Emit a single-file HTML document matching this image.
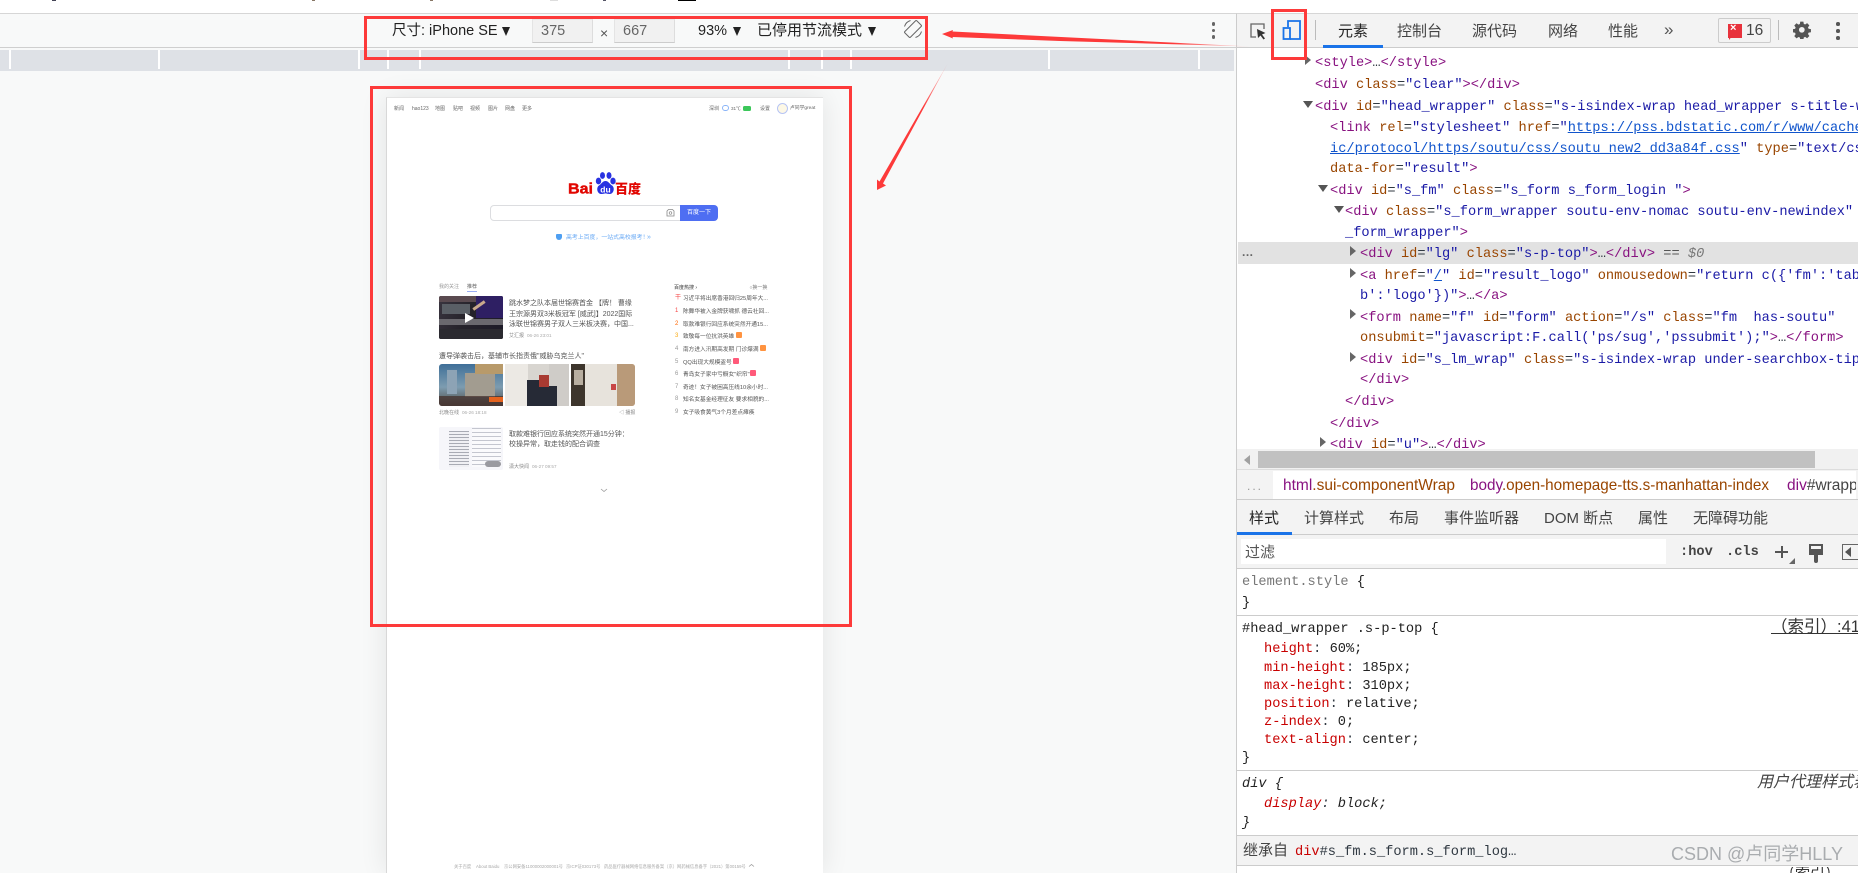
<!DOCTYPE html>
<html lang="zh"><head><meta charset="utf-8"><title>DevTools</title>
<style>
*{box-sizing:border-box}
html,body{margin:0;padding:0;width:1858px;height:873px;overflow:hidden;background:#fff}
body{position:relative;font-family:"Liberation Sans","Noto Sans CJK SC",sans-serif;color:#333}
.a{position:absolute;white-space:pre}
.t{position:absolute;white-space:pre;line-height:20px;font-size:15px;color:#444}
#code{position:absolute;left:1237px;top:48px;width:621px;height:401px;overflow:hidden;background:#fff}
.c{position:absolute;white-space:pre;font:13.67px/20px "Liberation Mono",monospace;color:#303942;margin-top:1.5px}
.g{color:#881280}.b{color:#994500}.v{color:#1a1aa6}.u{color:#1155cc;text-decoration:underline}
.r{color:#c80000}.k{color:#222}
.tri{position:absolute;width:0;height:0;border-left:6px solid #666;border-top:5px solid transparent;border-bottom:5px solid transparent}
.trd{position:absolute;width:0;height:0;border-top:7px solid #555;border-left:5px solid transparent;border-right:5px solid transparent}
#pg{position:absolute;left:386px;top:97px;width:437px;height:776px;background:#fff;border-left:1px solid #d8d8d8;border-top:1px solid #e4e4e4;box-shadow:0 0 26px rgba(0,0,0,.09)}
#mini{position:absolute;left:0;top:0;width:1236px;height:873px;overflow:hidden;filter:blur(.35px)}
.p{position:absolute;white-space:pre;font-size:5px;line-height:8px;color:#666;margin-top:1px}
.n{position:absolute;white-space:pre;font-size:7px;line-height:10px;color:#555;margin-top:1px}
.h{position:absolute;white-space:pre;font-size:5.7px;line-height:10px;color:#555;margin-top:1.5px}
.i{position:absolute;overflow:hidden;border-radius:2px}
.rb{position:absolute;border:3px solid #fd3a3a}
.tick{position:absolute;top:50px;width:2px;height:19px;background:#fff}
</style></head><body>
<!-- top sliver -->
<div class="a" style="left:52px;top:0;width:4px;height:1px;background:#445"></div>
<div class="a" style="left:312px;top:0;width:3px;height:1px;background:#876"></div>
<div class="a" style="left:430px;top:0;width:3px;height:1px;background:#876"></div>
<div class="a" style="left:550px;top:0;width:8px;height:1px;background:#ddd"></div>
<div class="a" style="left:603px;top:0;width:3px;height:1px;background:#556"></div>
<div class="a" style="left:678px;top:0;width:18px;height:1px;background:#000"></div>

<!-- device bar -->
<div class="a" style="left:0;top:13px;width:1236px;height:860px;background:#f8f9f9"></div>
<div class="a" style="left:0;top:13px;width:1236px;height:1px;background:#d6d6d6"></div>
<div class="a" style="left:0;top:47px;width:1236px;height:1px;background:#cfcfcf"></div>
<div class="t" style="left:392px;top:21px;font-size:14.5px;color:#222">尺寸: iPhone SE</div>
<div class="a" style="left:502px;top:27px;width:0;height:0;border-top:9px solid #222;border-left:4.5px solid transparent;border-right:4.5px solid transparent"></div>
<div class="a" style="left:532px;top:19px;width:61px;height:24px;background:#f1f1f1;border-bottom:1px solid #ccc;border-right:1px solid #ddd;border-left:1px solid #e4e4e4;border-top:1px solid #e8e8e8"></div>
<div class="t" style="left:541px;top:21px;font-size:14.5px;color:#666">375</div>
<div class="t" style="left:600px;top:23px;font-size:14px;color:#555">×</div>
<div class="a" style="left:614px;top:19px;width:61px;height:24px;background:#f1f1f1;border-bottom:1px solid #ccc;border-right:1px solid #ddd;border-left:1px solid #e4e4e4;border-top:1px solid #e8e8e8"></div>
<div class="t" style="left:623px;top:21px;font-size:14.5px;color:#666">667</div>
<div class="t" style="left:698px;top:21px;font-size:14.5px;color:#222">93%</div>
<div class="a" style="left:733px;top:27px;width:0;height:0;border-top:9px solid #222;border-left:4.5px solid transparent;border-right:4.5px solid transparent"></div>
<div class="t" style="left:757px;top:21px;font-size:15px;color:#222">已停用节流模式</div>
<div class="a" style="left:868px;top:27px;width:0;height:0;border-top:9px solid #222;border-left:4.5px solid transparent;border-right:4.5px solid transparent"></div>
<svg class="a" style="left:903px;top:19px" width="20" height="20" viewBox="0 0 20 20"><g fill="none" stroke="#666" stroke-width="1"><rect x="6" y="1.500" width="8" height="17" rx="1" transform="rotate(45 10 10)"/><path d="M1.500 7.500A9 9 0 0 1 7.500 1.500M18.500 12.500A9 9 0 0 1 12.500 18.500"/></g></svg>
<div class="a" style="left:1211.5px;top:22px;width:3.5px;height:3.5px;border-radius:50%;background:#666"></div>
<div class="a" style="left:1211.5px;top:28.5px;width:3.5px;height:3.5px;border-radius:50%;background:#666"></div>
<div class="a" style="left:1211.5px;top:35px;width:3.5px;height:3.5px;border-radius:50%;background:#666"></div>

<!-- ruler -->
<div class="a" style="left:0;top:50px;width:1234px;height:21px;background:#dee1e6"></div>
<div class="tick" style="left:9px"></div><div class="tick" style="left:158px"></div><div class="tick" style="left:358px"></div><div class="tick" style="left:387px"></div><div class="tick" style="left:419px"></div><div class="tick" style="left:788px"></div><div class="tick" style="left:821px"></div><div class="tick" style="left:850px"></div><div class="tick" style="left:1048px"></div><div class="tick" style="left:1198px"></div>

<!-- mobile preview -->
<div id="mini">
<div id="pg"></div>
<span class="p" style="left:394px;top:104px">新闻</span><span class="p" style="left:412px;top:104px">hao123</span><span class="p" style="left:435px;top:104px">地图</span><span class="p" style="left:453px;top:104px">贴吧</span><span class="p" style="left:470px;top:104px">视频</span><span class="p" style="left:488px;top:104px">图片</span><span class="p" style="left:505px;top:104px">网盘</span><span class="p" style="left:522px;top:104px">更多</span>
<span class="p" style="left:709px;top:104px">深圳</span>
<div class="a" style="left:722px;top:105px;width:7px;height:6px;border:1px solid #8ab4f8;border-radius:3px"></div>
<span class="p" style="left:731px;top:104px;font-size:4.6px">31℃</span>
<div class="a" style="left:743px;top:106px;width:8px;height:5px;background:#3cc75a;border-radius:1.5px"></div>
<span class="p" style="left:760px;top:104px">设置</span>
<div class="a" style="left:777px;top:103px;width:11px;height:11px;border-radius:50%;border:1px solid #b6c4f4;background:#fdf8e6"></div>
<span class="p" style="left:790px;top:104px;font-size:4.8px">卢同学great</span>

<svg class="a" style="left:560px;top:168px" width="90" height="32" viewBox="560 168 90 32">
<text x="568" y="193.500" font-family="Liberation Sans" font-weight="700" font-size="14.500" fill="#e10601" stroke="#e10601" stroke-width=".4" textLength="25" lengthAdjust="spacingAndGlyphs">Bai</text>
<g fill="#2932e1"><ellipse cx="598.500" cy="181" rx="2.700" ry="3.400"/><ellipse cx="602.500" cy="175.500" rx="2.500" ry="3.400"/><ellipse cx="609" cy="175.500" rx="2.500" ry="3.400"/><ellipse cx="613" cy="181" rx="2.700" ry="3.400"/><path d="M605.500 181c3 0 4 3 6.500 4.500c3 2 2 8-2 8.500c-2 .3-3-.6-4.500-.6s-2.500 .9-4.500 .6c-4-.5-5-6.500-2-8.500c2.500-1.500 3.500-4.500 6.500-4.500z"/></g>
<text x="605.500" y="192.500" text-anchor="middle" font-family="Liberation Sans" font-weight="700" font-size="8.500" fill="#fff">du</text>
<text x="615" y="193.500" font-family="Liberation Sans,Noto Sans CJK SC" font-weight="900" font-size="13" fill="#e10601" textLength="26" lengthAdjust="spacingAndGlyphs">百度</text>
</svg>

<div class="a" style="left:490px;top:205px;width:192px;height:15.500px;border:1px solid #dcdde0;border-radius:4px 0 0 4px;background:#fff"></div>
<div class="a" style="left:680px;top:205px;width:38px;height:15.500px;background:#4e6ef2;border-radius:0 4px 4px 0"></div>
<span class="p" style="left:687px;top:208px;color:#fff;font-size:6px">百度一下</span>
<svg class="a" style="left:666px;top:208px" width="9" height="9" viewBox="0 0 9 9"><path d="M1 8V3l1.500-1.500h4L8 3v5z" fill="none" stroke="#888" stroke-width=".8"/><circle cx="4.500" cy="5" r="1.300" fill="none" stroke="#888" stroke-width=".7"/></svg>
<div class="a" style="left:556px;top:234px;width:6px;height:6px;background:#4e9ff2;border-radius:1px 1px 3px 3px"></div>
<span class="p" style="left:566px;top:233px;color:#6aaaf5;font-size:5.900px">高考上百度，一站式高校报考！</span>
<span class="p" style="left:647px;top:233px;color:#6aaaf5;font-size:7px">»</span>

<span class="p" style="left:439px;top:282px;color:#999">我的关注</span><span class="p" style="left:467px;top:282px;color:#666">推荐</span>
<div class="a" style="left:467px;top:291px;width:10px;height:1px;background:#9aaef5"></div>

<div class="i" style="left:439px;top:296px;width:64px;height:43px;background:linear-gradient(115deg,#3a3540 0%,#25222a 45%,#1c1a28 100%)">
 <div class="a" style="left:0;top:0;width:64px;height:6px;background:#5a4a50"></div>
 <div class="a" style="left:37px;top:0;width:27px;height:22px;background:#2e1f63"></div>
 <div class="a" style="left:33px;top:8px;width:14px;height:3px;background:#c9a98c;transform:rotate(-35deg)"></div>
 <div class="a" style="left:3px;top:8px;width:28px;height:10px;background:#5a5f66"></div>
 <div class="a" style="left:0;top:23px;width:64px;height:6px;background:#6a686e"></div>
 <div class="a" style="left:0;top:33px;width:64px;height:10px;background:#2b2a30"></div>
 <div class="a" style="left:26px;top:17px;width:0;height:0;border-left:9px solid #fff;border-top:5px solid transparent;border-bottom:5px solid transparent"></div>
</div>
<span class="n" style="left:509px;top:298px">跳水梦之队本届世锦赛首金 【牌！ 曹缘</span>
<span class="n" style="left:509px;top:309px">王宗源男双3米板冠军 [威武]】2022国际</span>
<span class="n" style="left:509px;top:319px">泳联世锦赛男子双人三米板决赛，中国...</span>
<span class="p" style="left:509px;top:331px;color:#888">艾汇报</span><span class="p" style="left:527px;top:331px;color:#aaa;font-size:4.600px">06-26 23:01</span>

<span class="n" style="left:439px;top:351px">遭导弹袭击后，基辅市长指责俄"威胁乌克兰人"</span>
<div class="i" style="left:439px;top:364px;width:64px;height:42px;background:linear-gradient(180deg,#3f6f98 0%,#7d9cb0 55%,#4e4a44 100%);border-radius:3px 0 0 3px">
 <div class="a" style="left:26px;top:9px;width:30px;height:24px;background:#a29c90"></div>
 <div class="a" style="left:8px;top:6px;width:10px;height:24px;background:#8da3b5"></div>
 <div class="a" style="left:36px;top:0;width:28px;height:10px;background:#b89a6a"></div>
 <div class="a" style="left:0;top:32px;width:64px;height:10px;background:rgba(70,50,45,.75)"></div>
 <div class="a" style="left:50px;top:33px;width:14px;height:5px;background:#e4631e"></div>
</div>
<div class="i" style="left:505px;top:364px;width:64px;height:42px;background:#d8d5d0;border-radius:0">
 <div class="a" style="left:0;top:0;width:23px;height:42px;background:#ece9e4"></div>
 <div class="a" style="left:22px;top:16px;width:30px;height:26px;background:#262a36"></div>
 <div class="a" style="left:34px;top:11px;width:12px;height:12px;background:#a83a32"></div>
 <div class="a" style="left:44px;top:0;width:20px;height:42px;background:#cfccc8"></div>
 <div class="a" style="left:44px;top:22px;width:8px;height:20px;background:#262a36"></div>
</div>
<div class="i" style="left:571px;top:364px;width:64px;height:42px;background:#d9c3ac;border-radius:0 3px 3px 0">
 <div class="a" style="left:0;top:0;width:14px;height:42px;background:#3d352c"></div>
 <div class="a" style="left:3px;top:6px;width:9px;height:15px;background:#b8aea0"></div>
 <div class="a" style="left:14px;top:0;width:32px;height:42px;background:#e7e3dc"></div>
 <div class="a" style="left:40px;top:20px;width:5px;height:6px;background:#c84646"></div>
 <div class="a" style="left:46px;top:0;width:18px;height:42px;background:#b99a79"></div>
</div>
<span class="p" style="left:439px;top:408px;color:#888">北晚在线</span><span class="p" style="left:462px;top:408px;color:#aaa;font-size:4.600px">06-26 18:18</span>
<span class="p" style="left:619px;top:408px;color:#888">◁ 播报</span>

<div class="i" style="left:439px;top:427px;width:64px;height:43px;background:#f6f6fa">
 <div class="a" style="left:10px;top:4px;width:20px;height:36px;background:repeating-linear-gradient(180deg,#a9abb4 0 1px,#f0f0f4 1px 3px)"></div>
 <div class="a" style="left:33px;top:1px;width:29px;height:39px;background:repeating-linear-gradient(180deg,#c4c6cf 0 1px,#fafafc 1px 4px)"></div>
 <div class="a" style="left:46px;top:34px;width:16px;height:6px;border-radius:3px;background:#9a9aa0"></div>
</div>
<span class="n" style="left:509px;top:429px">取款难银行回应系统突然开通15分钟：</span>
<span class="n" style="left:509px;top:439px">校操异常，取走钱的配合调查</span>
<span class="p" style="left:509px;top:462px;color:#888">潇大快闻</span><span class="p" style="left:532px;top:462px;color:#aaa;font-size:4.600px">06-27 09:57</span>
<svg class="a" style="left:600px;top:488px" width="8" height="5" viewBox="0 0 8 5"><path d="M1 1l3 2.500L7 1" fill="none" stroke="#999" stroke-width=".8"/></svg>

<span class="p" style="left:674px;top:283px;color:#333">百度热搜 ›</span><span class="p" style="left:748px;top:283px;color:#777"> ○换一换</span>
<span class="p" style="left:675px;top:293px;color:#f54545;font-size:6px">干</span><span class="h" style="left:683px;top:292px">习近平将出席香港回归25周年大...</span>
<span class="p" style="left:675px;top:306px;color:#f54545;font-size:6px">1</span><span class="h" style="left:683px;top:305px">陈舞华被入金牌获啸抓 德云社回...</span>
<span class="p" style="left:675px;top:319px;color:#ff6600;font-size:6px">2</span><span class="h" style="left:683px;top:318px">取款难银行回应系统突然开通15...</span>
<span class="p" style="left:675px;top:331px;color:#faa90e;font-size:6px">3</span><span class="h" style="left:683px;top:330px">致敬每一位抗洪英雄</span><div class="a" style="left:736px;top:332px;width:6px;height:6px;background:#ff9340;border-radius:1px"></div>
<span class="p" style="left:675px;top:344px;color:#999;font-size:6px">4</span><span class="h" style="left:683px;top:343px">南方进入汛期高发期 门诊爆满</span><div class="a" style="left:760px;top:345px;width:6px;height:6px;background:#ff9340;border-radius:1px"></div>
<span class="p" style="left:675px;top:357px;color:#999;font-size:6px">5</span><span class="h" style="left:683px;top:356px">QQ出现大规模盗号</span><div class="a" style="left:733px;top:358px;width:6px;height:6px;background:#ff5a7a;border-radius:1px"></div>
<span class="p" style="left:675px;top:369px;color:#999;font-size:6px">6</span><span class="h" style="left:683px;top:368px">青岛女子家中亏橱女"织帘"</span><div class="a" style="left:750px;top:370px;width:6px;height:6px;background:#ff5a7a;border-radius:1px"></div>
<span class="p" style="left:675px;top:382px;color:#999;font-size:6px">7</span><span class="h" style="left:683px;top:381px">奇迹！女子被困高压线10余小时...</span>
<span class="p" style="left:675px;top:394px;color:#999;font-size:6px">8</span><span class="h" style="left:683px;top:393px">知名女基金经理征友 要求相貌的...</span>
<span class="p" style="left:675px;top:407px;color:#999;font-size:6px">9</span><span class="h" style="left:683px;top:406px">女子吸食黄气3个月差点瘫痪</span>

<span class="p" style="left:454px;top:862px;color:#aaa;font-size:4.300px">关于百度</span><span class="p" style="left:476px;top:862px;color:#aaa;font-size:4.300px">About Baidu</span><span class="p" style="left:504px;top:862px;color:#aaa;font-size:4.300px">京公网安备11000002000001号</span><span class="p" style="left:566px;top:862px;color:#aaa;font-size:4.300px">京ICP证030173号</span><span class="p" style="left:604px;top:862px;color:#aaa;font-size:4.300px">药品医疗器械网络信息服务备案（京）网药械信息备字（2021）第00159号</span>
<svg class="a" style="left:748px;top:863px" width="7" height="5" viewBox="0 0 7 5"><path d="M1 3.500L3.500 1.500 6 3.500" fill="none" stroke="#999" stroke-width=".8"/></svg>
</div>

<!-- DevTools -->
<div class="a" style="left:1236px;top:0;width:622px;height:873px;background:#fff;border-left:1px solid #ccc"></div>
<div class="a" style="left:1236px;top:0;width:622px;height:13px;background:#fff"></div>
<div class="a" style="left:1236px;top:13px;width:622px;height:35px;background:#f3f3f3;border-top:1px solid #d6d6d6;border-bottom:1px solid #ccc;border-left:1px solid #ccc"></div>
<svg class="a" style="left:1249px;top:22px" width="19" height="18" viewBox="0 0 19 18"><path d="M7 15H2V2h13v5" fill="none" stroke="#666" stroke-width="1.300"/><path d="M8 7l8.500 4-3.500 1.500 3 4-1.500 1-3-4-2.500 2.500z" fill="#333"/></svg>
<svg class="a" style="left:1282px;top:19px" width="20" height="21" viewBox="0 0 20 21"><g fill="none" stroke="#1a73e8" stroke-width="1.800"><path d="M6 8V2h12v18H8"/><rect x="1.500" y="9" width="6.500" height="11"/></g></svg>
<div class="a" style="left:1315px;top:20px;width:1px;height:20px;background:#bbb"></div>
<div class="t" style="left:1338px;top:21.500px;color:#222">元素</div>
<div class="t" style="left:1397px;top:21.500px">控制台</div>
<div class="t" style="left:1472px;top:21.500px">源代码</div>
<div class="t" style="left:1548px;top:21.500px">网络</div>
<div class="t" style="left:1608px;top:21.500px">性能</div>
<div class="t" style="left:1664px;top:20px;font-size:17px;color:#555">»</div>
<div class="a" style="left:1323px;top:45px;width:60px;height:3px;background:#1a73e8"></div>
<div class="a" style="left:1718px;top:18px;width:53px;height:25px;border:1px solid #ccc;border-radius:2px"></div>
<div class="a" style="left:1728px;top:24px;width:14px;height:14px;background:#e8323c"></div>
<div class="a" style="left:1729px;top:35px;width:0;height:0;border-top:5px solid #e8323c;border-right:4px solid transparent"></div>
<div class="t" style="left:1730px;top:21px;font-size:11px;line-height:14px;font-weight:700;color:#fff">×</div>
<div class="t" style="left:1746px;top:21px;font-size:15.500px;color:#444">16</div>
<div class="a" style="left:1778px;top:20px;width:1px;height:20px;background:#bbb"></div>
<svg class="a" style="left:1793px;top:21px" width="18" height="18" viewBox="0 0 18 18"><path fill="#555" fill-rule="evenodd" d="M7.400 1h3.200l.4 2.400 1.400.6 2-1.400 2.300 2.300-1.400 2 .6 1.400 2.400.4v3.200l-2.400.4-.6 1.400 1.400 2-2.300 2.300-2-1.400-1.400.6-.4 2.400H7.400L7 17.300l-1.400-.6-2 1.400-2.300-2.300 1.400-2-.6-1.400L-.3 12V8.800L2.100 8.400l.6-1.400-1.400-2L3.600 2.700l2 1.400L7 3.500zM9 6.500a2.900 2.900 0 1 0 0 5.800 2.900 2.900 0 0 0 0-5.800z" transform="translate(0 -.4) scale(.98)"/></svg>
<div class="a" style="left:1836px;top:22px;width:3.500px;height:3.500px;border-radius:50%;background:#555"></div>
<div class="a" style="left:1836px;top:29px;width:3.500px;height:3.500px;border-radius:50%;background:#555"></div>
<div class="a" style="left:1836px;top:36px;width:3.500px;height:3.500px;border-radius:50%;background:#555"></div>

<div id="code">
<div class="a" style="left:1px;top:194px;width:620px;height:22px;background:#e2e2e2"></div>
<div class="a" style="left:5px;top:199px;font:700 12px/10px 'Liberation Sans';color:#666;letter-spacing:.5px">...</div>
<div class="tri" style="left:68px;top:7px"></div>
<div class="c" style="left:78px;top:4px"><span class="g">&lt;style&gt;</span>…<span class="g">&lt;/style&gt;</span></div>
<div class="c" style="left:78px;top:26px"><span class="g">&lt;div</span> <span class="b">class</span>=<span class="v">"clear"</span><span class="g">&gt;&lt;/div&gt;</span></div>
<div class="trd" style="left:66px;top:53px"></div>
<div class="c" style="left:78px;top:48px"><span class="g">&lt;div</span> <span class="b">id</span>=<span class="v">"head_wrapper"</span> <span class="b">class</span>=<span class="v">"s-isindex-wrap head_wrapper s-title-wrapper"</span></div>
<div class="c" style="left:93px;top:69px"><span class="g">&lt;link</span> <span class="b">rel</span>=<span class="v">"stylesheet"</span> <span class="b">href</span>=<span class="v">"</span><span class="u">https://pss.bdstatic.com/r/www/cache/static</span></div>
<div class="c" style="left:93px;top:90px"><span class="u">ic/protocol/https/soutu/css/soutu_new2_dd3a84f.css</span><span class="v">"</span> <span class="b">type</span>=<span class="v">"text/css"</span></div>
<div class="c" style="left:93px;top:110px"><span class="b">data-for</span>=<span class="v">"result"</span><span class="g">&gt;</span></div>
<div class="trd" style="left:81px;top:137px"></div>
<div class="c" style="left:93px;top:132px"><span class="g">&lt;div</span> <span class="b">id</span>=<span class="v">"s_fm"</span> <span class="b">class</span>=<span class="v">"s_form s_form_login "</span><span class="g">&gt;</span></div>
<div class="trd" style="left:97px;top:158px"></div>
<div class="c" style="left:108px;top:153px"><span class="g">&lt;div</span> <span class="b">class</span>=<span class="v">"s_form_wrapper soutu-env-nomac soutu-env-newindex"</span></div>
<div class="c" style="left:108px;top:174px"><span class="v">_form_wrapper"</span><span class="g">&gt;</span></div>
<div class="tri" style="left:113px;top:198px"></div>
<div class="c" style="left:123px;top:195px"><span class="g">&lt;div</span> <span class="b">id</span>=<span class="v">"lg"</span> <span class="b">class</span>=<span class="v">"s-p-top"</span><span class="g">&gt;</span>…<span class="g">&lt;/div&gt;</span> <span style="color:#555">==</span> <span style="color:#777;font-style:italic">$0</span></div>
<div class="tri" style="left:113px;top:220px"></div>
<div class="c" style="left:123px;top:217px"><span class="g">&lt;a</span> <span class="b">href</span>=<span class="v">"</span><span class="u">/</span><span class="v">"</span> <span class="b">id</span>=<span class="v">"result_logo"</span> <span class="b">onmousedown</span>=<span class="v">"return c({'fm':'tab','ta</span></div>
<div class="c" style="left:123px;top:237px"><span class="v">b':'logo'})"</span><span class="g">&gt;</span>…<span class="g">&lt;/a&gt;</span></div>
<div class="tri" style="left:113px;top:261px"></div>
<div class="c" style="left:123px;top:259px"><span class="g">&lt;form</span> <span class="b">name</span>=<span class="v">"f"</span> <span class="b">id</span>=<span class="v">"form"</span> <span class="b">action</span>=<span class="v">"/s"</span> <span class="b">class</span>=<span class="v">"fm  has-soutu"</span></div>
<div class="c" style="left:123px;top:279px"><span class="b">onsubmit</span>=<span class="v">"javascript:F.call('ps/sug','pssubmit');"</span><span class="g">&gt;</span>…<span class="g">&lt;/form&gt;</span></div>
<div class="tri" style="left:113px;top:304px"></div>
<div class="c" style="left:123px;top:301px"><span class="g">&lt;div</span> <span class="b">id</span>=<span class="v">"s_lm_wrap"</span> <span class="b">class</span>=<span class="v">"s-isindex-wrap under-searchbox-tips"</span></div>
<div class="c" style="left:123px;top:321px"><span class="g">&lt;/div&gt;</span></div>
<div class="c" style="left:108px;top:343px"><span class="g">&lt;/div&gt;</span></div>
<div class="c" style="left:93px;top:365px"><span class="g">&lt;/div&gt;</span></div>
<div class="tri" style="left:83px;top:389px"></div>
<div class="c" style="left:93px;top:386px"><span class="g">&lt;div</span> <span class="b">id</span>=<span class="v">"u"</span><span class="g">&gt;</span>…<span class="g">&lt;/div&gt;</span></div>
</div>

<!-- h scrollbar -->
<div class="a" style="left:1237px;top:449px;width:621px;height:21px;background:#f1f1f1;border-bottom:1px solid #ddd"></div>
<div class="a" style="left:1258px;top:451px;width:557px;height:17px;background:#c1c1c1"></div>
<div class="a" style="left:1244px;top:455px;width:0;height:0;border-right:6px solid #a0a0a0;border-top:5px solid transparent;border-bottom:5px solid transparent"></div>

<!-- breadcrumb -->
<div class="a" style="left:1237px;top:470px;width:621px;height:30px;background:#f3f3f3;border-bottom:1px solid #ccc"></div>
<div class="a" style="left:1273px;top:471px;width:583px;height:28px;background:#fff"></div>
<div class="t" style="left:1247px;top:476px;color:#999;letter-spacing:2px;font-size:12px">...</div>
<div class="t" style="left:1283px;top:476px;font-size:15.500px;overflow:hidden"><span class="g">html</span><span class="b">.sui-componentWrap</span></div>
<div class="t" style="left:1470px;top:476px;font-size:15.250px"><span class="g">body</span><span class="b">.open-homepage-tts.s-manhattan-index</span></div>
<div class="t" style="left:1787px;top:476px;font-size:15.500px;width:69px;overflow:hidden"><span class="g">div</span><span style="color:#444">#wrapper</span></div>

<!-- tabs -->
<div class="a" style="left:1237px;top:500px;width:621px;height:35px;background:#f3f3f3;border-bottom:1px solid #ccc"></div>
<div class="a" style="left:1237px;top:532px;width:55px;height:3px;background:#1a73e8"></div>
<div class="t" style="left:1249px;top:509px;color:#222">样式</div>
<div class="t" style="left:1304px;top:509px">计算样式</div>
<div class="t" style="left:1389px;top:509px">布局</div>
<div class="t" style="left:1444px;top:509px">事件监听器</div>
<div class="t" style="left:1544px;top:509px">DOM 断点</div>
<div class="t" style="left:1638px;top:509px">属性</div>
<div class="t" style="left:1693px;top:509px">无障碍功能</div>

<!-- filter -->
<div class="a" style="left:1237px;top:535px;width:621px;height:34px;background:#f3f3f3;border-bottom:1px solid #ccc"></div>
<div class="a" style="left:1241px;top:539px;width:425px;height:25px;background:#fff"></div>
<div class="t" style="left:1245px;top:543px;color:#555">过滤</div>
<div class="c" style="left:1680px;top:541px;font-weight:700;color:#444">:hov</div>
<div class="c" style="left:1726px;top:541px;font-weight:700;color:#444">.cls</div>
<div class="a" style="left:1775px;top:551px;width:13px;height:2px;background:#555"></div>
<div class="a" style="left:1780.500px;top:546px;width:2px;height:12px;background:#555"></div>
<div class="a" style="left:1789px;top:558px;width:0;height:0;border-bottom:6px solid #666;border-left:6px solid transparent"></div>
<svg class="a" style="left:1808px;top:543px" width="16" height="20" viewBox="0 0 16 20"><path fill="#555" d="M1 1h14v11H10v6a2 2 0 0 1-4 0v-6H1zM3 3v3h10V3z"/></svg>
<div class="a" style="left:1842px;top:544px;width:16px;height:16px;border:1.500px solid #666;border-right:0"></div>
<div class="a" style="left:1845px;top:547px;width:0;height:0;border-right:6px solid #555;border-top:5px solid transparent;border-bottom:5px solid transparent"></div>

<!-- styles -->
<div class="c" style="left:1242px;top:571px;color:#777">element.style <span class="k">{</span></div>
<div class="c k" style="left:1242px;top:592px">}</div>
<div class="a" style="left:1237px;top:615px;width:621px;height:1px;background:#ccc"></div>
<div class="c k" style="left:1242px;top:618px">#head_wrapper .s-p-top {</div>
<div class="t" style="left:1771px;top:617px;font-size:16.500px;color:#333;text-decoration:underline;width:87px;overflow:hidden">（索引）:41</div>
<div class="c" style="left:1264px;top:638px"><span class="r">height</span>: <span class="k">60%;</span></div>
<div class="c" style="left:1264px;top:657px"><span class="r">min-height</span>: <span class="k">185px;</span></div>
<div class="c" style="left:1264px;top:675px"><span class="r">max-height</span>: <span class="k">310px;</span></div>
<div class="c" style="left:1264px;top:693px"><span class="r">position</span>: <span class="k">relative;</span></div>
<div class="c" style="left:1264px;top:711px"><span class="r">z-index</span>: <span class="k">0;</span></div>
<div class="c" style="left:1264px;top:729px"><span class="r">text-align</span>: <span class="k">center;</span></div>
<div class="c k" style="left:1242px;top:747px">}</div>
<div class="a" style="left:1237px;top:770px;width:621px;height:1px;background:#ccc"></div>
<div class="c k" style="left:1242px;top:773px;font-style:italic">div {</div>
<div class="t" style="left:1757px;top:773px;font-size:16px;font-style:italic;color:#444;width:101px;overflow:hidden">用户代理样式表</div>
<div class="c" style="left:1264px;top:793px;font-style:italic"><span class="r">display</span>: <span class="k">block;</span></div>
<div class="c k" style="left:1242px;top:812px;font-style:italic">}</div>
<div class="a" style="left:1237px;top:835px;width:621px;height:31px;background:#f3f3f3;border-top:1px solid #ccc;border-bottom:1px solid #ccc"></div>
<div class="t" style="left:1243px;top:841px;color:#444">继承自</div>
<div class="c" style="left:1295px;top:841px"><span class="r">div</span>#s_fm.s_form.s_form_log…</div>
<div style="position:absolute;left:1237px;top:867px;width:621px;height:6px;overflow:hidden">
<div class="t" style="left:543px;top:-3px;color:#333">（索引）</div></div>
<div class="t" style="left:1671px;top:844px;font-size:18px;color:#a9acaf">CSDN @卢同学HLLY</div>

<!-- annotations -->
<div class="rb" style="left:364px;top:16px;width:564px;height:44px"></div>
<div class="rb" style="left:370px;top:86px;width:482px;height:541px"></div>
<div class="rb" style="left:1271px;top:9px;width:36px;height:51px"></div>
<svg class="a" style="left:0;top:0" width="1858" height="873" viewBox="0 0 1858 873">
<defs><linearGradient id="f1" x1="942" x2="1250" y1="0" y2="0" gradientUnits="userSpaceOnUse"><stop offset="0" stop-color="#fd3a3a"/><stop offset=".75" stop-color="#fd3a3a"/><stop offset="1" stop-color="#fd3a3a" stop-opacity=".1"/></linearGradient>
<linearGradient id="f2" x1="948" x2="877" y1="63" y2="189" gradientUnits="userSpaceOnUse"><stop offset="0" stop-color="#fd3a3a" stop-opacity=".1"/><stop offset=".35" stop-color="#fd3a3a"/><stop offset="1" stop-color="#fd3a3a"/></linearGradient></defs>
<polygon fill="url(#f1)" points="942,34 953,30 952.500,31.500 1250,46.500 1060,41 952.500,37 953,38.500"/>
<polygon fill="url(#f2)" points="877,190 877,179.500 879.500,181.500 948,63 883,183.500 886,185.500"/>
</svg>
</body></html>
